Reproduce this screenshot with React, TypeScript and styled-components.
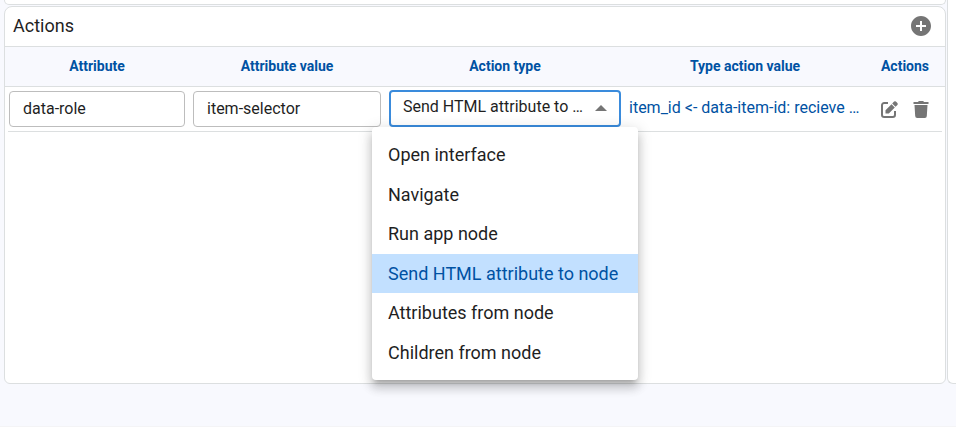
import React, { useState } from "react";
import styled, { createGlobalStyle } from "styled-components";

const ink = "#1f1f1f";
const blue = "#0052a3";
const line = "#dcdfe0";
const tint = "#f8f9fe";
const iconGrey = "#757575";

const GlobalStyle = createGlobalStyle`
  *, *::before, *::after { box-sizing: border-box; }
  body {
    margin: 0;
    background: #fff;
    color: ${ink};
    font-family: Roboto, "Liberation Sans", sans-serif;
    font-size: 16px;
  }
`;

const Page = styled.main`
  display: grid;
  grid-template-columns: minmax(0, 1fr) 9px;
  column-gap: 1px;
  padding: 0 0 42px 4px;
  background: ${tint};
  border-bottom: 1px solid #f4f4f6;
  overflow: hidden;
`;

const Column = styled.div`
  display: flex;
  flex-direction: column;
  gap: 1px;
`;

const PreviousPanel = styled.div`
  height: 5px;
  background: #fff;
  border: 1px solid ${line};
  border-top: 0;
  border-radius: 0 0 6px 6px;
`;

const NeighbourPanel = styled.aside`
  background: #fff;
  border: solid ${line};
  border-width: 0 0 1px 1px;
  border-radius: 0 0 0 6px;
`;

const Panel = styled.section`
  min-height: 378px;
  background: #fff;
  border: 1px solid ${line};
  border-radius: 8px 8px 6px 6px;
`;

const PanelHeader = styled.header`
  display: flex;
  align-items: center;
  justify-content: space-between;
  height: 40px;
  padding: 0 12px 2px 8px;
  border-bottom: 1px solid ${line};
`;

const Title = styled.h2`
  margin: 0;
  font-size: 18px;
  font-weight: 400;
  line-height: 24px;
`;

const Table = styled.table`
  width: 100%;
  table-layout: fixed;
  border-collapse: separate;
  border-spacing: 0;
`;

const Col = styled.col<{ $width?: number }>`
  width: ${(p) => (p.$width ? `${p.$width}px` : "auto")};
`;

const HeadCell = styled.th`
  height: 40px;
  padding: 0 0 2px;
  background: ${tint};
  border-bottom: 1px solid ${line};
  color: ${blue};
  font-size: 14px;
  font-weight: 700;
  text-align: center;
`;

const Row = styled.tr`
  background: linear-gradient(${line}, ${line}) center bottom / calc(100% - 6px) 1px no-repeat;
`;

const Cell = styled.td`
  height: 45px;
  padding: 3px 4px 5px;
  vertical-align: bottom;
`;

const TextField = styled.input`
  display: block;
  width: 100%;
  height: 36px;
  padding: 0 13px 2px;
  border: 1px solid #bdbdbd;
  border-radius: 4px;
  background: #fff;
  color: ${ink};
  font: inherit;
  outline: 0;
`;

const SelectBox = styled.div`
  position: relative;
`;

const Select = styled.select`
  display: block;
  width: 100%;
  height: 37px;
  padding: 0 36px 4px 12px;
  border: 2px solid #3a8bdc;
  border-radius: 4px;
  appearance: none;
  background: #fff;
  color: ${ink};
  font: inherit;
  text-overflow: ellipsis;
  outline: 0;
`;

const Arrow = styled.svg`
  position: absolute;
  top: 15px;
  right: 14px;
  pointer-events: none;
`;

const Menu = styled.ul`
  position: absolute;
  z-index: 1;
  top: 100%;
  left: 50%;
  transform: translateX(-50%);
  display: flex;
  flex-direction: column;
  width: 266px;
  height: 253px;
  margin: 0;
  padding: 8px 0;
  list-style: none;
  background: #fff;
  border-radius: 4px;
  box-shadow: 0 5px 5px -3px rgba(0, 0, 0, 0.2), 0 8px 10px 1px rgba(0, 0, 0, 0.14),
    0 3px 14px 2px rgba(0, 0, 0, 0.12);
`;

const MenuItem = styled.li`
  display: flex;
  flex: 1;
`;

const MenuButton = styled.button<{ $selected: boolean }>`
  flex: 1;
  padding: 0 16px;
  border: 0;
  background: ${(p) => (p.$selected ? "#c2e0ff" : "transparent")};
  color: ${(p) => (p.$selected ? blue : ink)};
  font: inherit;
  font-size: 18px;
  text-align: left;
  white-space: nowrap;
  cursor: pointer;
`;

const ValueLink = styled.a`
  display: block;
  padding-bottom: 7px;
  color: ${blue};
  line-height: 24px;
  text-decoration: none;
  white-space: nowrap;
`;

const Tools = styled.div`
  display: flex;
  justify-content: center;
  gap: 8px;
  padding-bottom: 6px;
`;

const IconButton = styled.button`
  display: flex;
  padding: 0;
  border: 0;
  background: none;
  color: ${iconGrey};
  cursor: pointer;
`;

const AddIcon = () => (
  <svg width="24" height="24" viewBox="0 0 24 24" fill="currentColor" aria-hidden="true">
    <path d="M12 2C6.48 2 2 6.48 2 12s4.48 10 10 10 10-4.48 10-10S17.52 2 12 2zm5 11h-4v4h-2v-4H7v-2h4V7h2v4h4v2z" />
  </svg>
);

const EditIcon = () => (
  <svg width="24" height="24" viewBox="0 0 24 24" aria-hidden="true">
    <path
      d="M11 6H7.2A2.200 2.200 0 0 0 5 8.200v9.600A2.200 2.200 0 0 0 7.200 20h8.600a2.200 2.200 0 0 0 2.200-2.200V14"
      fill="none"
      stroke="currentColor"
      strokeWidth="2"
    />
    <path
      d="M8.500 13.200V16.500h3.300l6-6-3.300-3.300zM15.200 6.500l3.300 3.300 1.900-1.900a1.300 1.300 0 0 0 0-1.800l-1.500-1.500a1.300 1.300 0 0 0-1.800 0z"
      fill="currentColor"
    />
  </svg>
);

const DeleteIcon = () => (
  <svg width="24" height="24" viewBox="0 0 24 24" fill="currentColor" aria-hidden="true">
    <path d="M5.500 8h13L17.800 19a2 2 0 0 1-2 2H8.200a2 2 0 0 1-2-2zM4.500 5H9l.8-1h4.400l.8 1h4.500v2h-15z" />
  </svg>
);

const actionTypes = [
  "Open interface",
  "Navigate",
  "Run app node",
  "Send HTML attribute to node",
  "Attributes from node",
  "Children from node",
];

export default function App() {
  const [action, setAction] = useState(actionTypes[3]);

  return (
    <>
      <GlobalStyle />
      <Page>
        <Column>
          <PreviousPanel />
          <Panel aria-labelledby="actions-title">
            <PanelHeader>
              <Title id="actions-title">Actions</Title>
              <IconButton type="button" aria-label="Add action">
                <AddIcon />
              </IconButton>
            </PanelHeader>
            <Table>
              <colgroup>
                <Col $width={184} />
                <Col $width={196} />
                <Col $width={240} />
                <Col />
                <Col $width={80} />
              </colgroup>
              <thead>
                <tr>
                  <HeadCell scope="col">Attribute</HeadCell>
                  <HeadCell scope="col">Attribute value</HeadCell>
                  <HeadCell scope="col">Action type</HeadCell>
                  <HeadCell scope="col">Type action value</HeadCell>
                  <HeadCell scope="col">Actions</HeadCell>
                </tr>
              </thead>
              <tbody>
                <Row>
                  <Cell>
                    <TextField aria-label="Attribute" defaultValue="data-role" />
                  </Cell>
                  <Cell>
                    <TextField aria-label="Attribute value" defaultValue="item-selector" />
                  </Cell>
                  <Cell>
                    <SelectBox>
                      <Select
                        aria-label="Action type"
                        value={action}
                        onChange={(e) => setAction(e.target.value)}
                      >
                        {actionTypes.map((name) => (
                          <option key={name}>{name}</option>
                        ))}
                      </Select>
                      <Arrow width="12" height="6" viewBox="0 0 12 6" aria-hidden="true">
                        <path d="M0 6 6 0l6 6z" fill={iconGrey} />
                      </Arrow>
                      <Menu aria-label="Action types">
                        {actionTypes.map((name) => (
                          <MenuItem key={name}>
                            <MenuButton
                              type="button"
                              $selected={name === action}
                              aria-pressed={name === action}
                              onClick={() => setAction(name)}
                            >
                              {name}
                            </MenuButton>
                          </MenuItem>
                        ))}
                      </Menu>
                    </SelectBox>
                  </Cell>
                  <Cell>
                    <ValueLink href="#value">item_id &lt;- data-item-id: recieve …</ValueLink>
                  </Cell>
                  <Cell>
                    <Tools>
                      <IconButton type="button" aria-label="Edit action">
                        <EditIcon />
                      </IconButton>
                      <IconButton type="button" aria-label="Delete action">
                        <DeleteIcon />
                      </IconButton>
                    </Tools>
                  </Cell>
                </Row>
              </tbody>
            </Table>
          </Panel>
        </Column>
        <NeighbourPanel />
      </Page>
    </>
  );
}
